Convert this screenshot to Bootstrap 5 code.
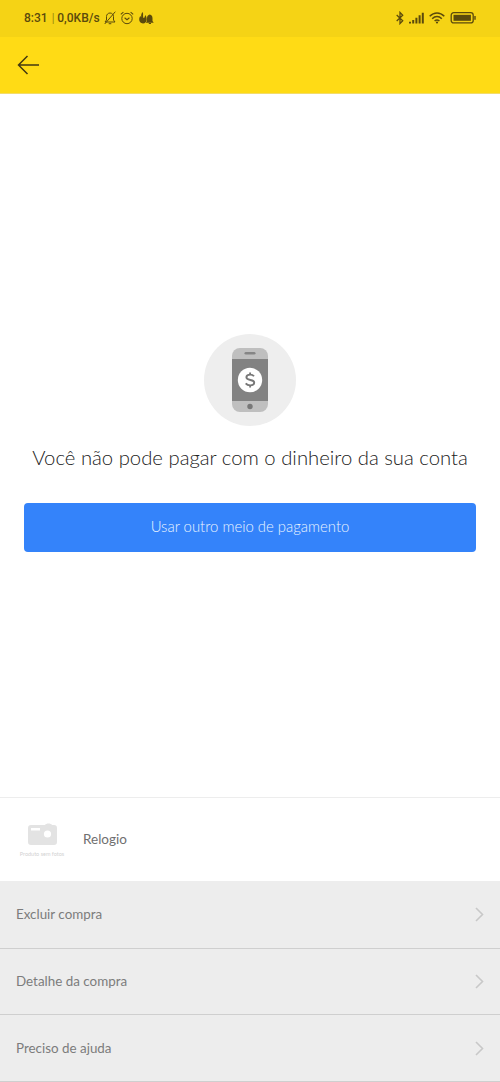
<!DOCTYPE html>
<html lang="pt-BR">
<head>
  <meta charset="UTF-8">
  <meta name="viewport" content="width=device-width, initial-scale=1">
  <title>Pagamento</title>
  <link rel="stylesheet" href="https://cdn.jsdelivr.net/npm/bootstrap@5.3.0/dist/css/bootstrap.min.css">
  <style>
    body { font-family: Lato, "Liberation Sans", sans-serif; color: #4f4f4f; height: 1082px; overflow: hidden; }
    svg { display: block; flex: none; }
    .status-bar { height: 37px; background: #f5d315; color: #5b4a0c; padding: 0 24px 1px; font: 500 12px Roboto, sans-serif; }
    .status-sep { padding: 0 3px 0 4px; opacity: .8; }
    .icon-gap { margin-left: 5px; }
    .top-bar { height: 57px; background: #ffdb15; padding-left: 17px; border-bottom: 1px solid #f3dc6c; }
    .notice { padding: 0 24px 6px; }
    .notice-title { font-size: 20.3px; font-weight: 300; line-height: 28px; margin: 17px 0 32px; color: #222; }
    .btn-pay { height: 49px; background: #3483fa; border: 0; border-radius: 4px; color: #e8f3ff; font-size: 14.9px; font-weight: 300; padding: 0 0 1px; }
    .btn-pay:hover { background: #2968c8; color: #fff; }
    .product { height: 84px; border-top: 1px solid #ededed; padding-left: 19px; font-size: 13.5px; color: #707070; }
    .thumb { width: 46px; padding-top: 2px; margin-right: 18px; font-size: 5.5px; line-height: 8px; color: #d2d2d2; }
    .options .list-group-item { height: 67px; background: #ededed; border-color: #cfcfcf; border-width: 0 0 1px; color: #7c7c7c; font-size: 13.4px; padding: 0 16px; }
    .options .list-group-item:first-child { height: 68px; }
    .options .list-group-item:nth-child(2) { height: 66px; }
    .options .list-group-item:last-child { border-bottom-width: 1px; }
  </style>
</head>
<body class="d-flex flex-column bg-white">
  <!-- Barra de status -->
  <div class="status-bar d-flex align-items-center">
    <span>8:31</span>
    <span class="status-sep fw-light">|</span>
    <span>0,0KB/s</span>
    <svg width="12" height="14" viewBox="0 0 12 14" fill="none" stroke="currentColor" class="ms-1">
      <path d="M1 11h10L9.500 9V5.500C9.500 3.500 8 2 6 2S2.500 3.500 2.500 5.500V9L1 11M4.700 12.700h2.600M11.300.7.7 13"/>
    </svg>
    <svg width="14" height="14" viewBox="0 0 14 14" fill="none" stroke="currentColor" class="ms-1">
      <circle cx="7" cy="7.500" r="5.200"/><path d="M4.600 6.800 7 8.700l2.400-1.900M.8 3.400l2.600-2.200M13.200 3.400l-2.600-2.200" stroke-width="1.100"/>
    </svg>
    <svg width="15" height="14" viewBox="0 0 15 14" fill="currentColor" class="icon-gap">
      <path d="M3.400 1C4.800 2.500 3.600 4.500 4.300 6.500c.4.900 1.100.5 1.200-.3L6.400 4c1 1.500 1.300 3 1.300 4.800 0 2-1.600 3.700-3.700 3.700C1.500 12.500.2 10.700.2 8.600.2 7 .7 6 1.300 5l.9 1.200C1.900 4.300 2.400 2.500 3.400 1z"/>
      <path d="M6.800 11.700 8 10V7.200c0-2 1.100-3.400 2.800-3.700 1.700.3 2.700 1.700 2.700 3.700V10l1.200 1.700zM9.800 12h2.200v1H9.800z"/>
    </svg>

    <svg class="ms-auto" width="8" height="14" viewBox="0 0 8 14" fill="none" stroke="currentColor" stroke-width="1.300">
      <path d="m.7 4 6 5.800L4 12.600V1.400l2.700 2.800L.7 10"/>
    </svg>
    <svg width="15" height="12" viewBox="0 0 15 12" fill="currentColor" class="icon-gap">
      <path d="M0 9.700h2V11.500H0zM3.200 7.900h2v3.600h-2zM6.400 5.700h2v5.800h-2zM9.600 3.300h2v8.200h-2zM12.800.8h2v10.700h-2z"/>
    </svg>
    <svg width="16" height="12" viewBox="0 0 16 12" fill="none" stroke="currentColor" stroke-width="1.500" class="icon-gap">
      <path d="M.7 4.200C5-.2 11-.2 15.300 4.200M3.200 6.700c2.900-2.900 6.700-2.900 9.600 0M5.600 9c1.500-1.300 3.300-1.300 4.800 0"/>
      <circle cx="8" cy="10.500" r="1.100" fill="currentColor" stroke="none"/>
    </svg>
    <svg width="26" height="12" viewBox="0 0 26 12" fill="none" stroke="currentColor" class="icon-gap">
      <rect x="1.200" y=".7" width="22" height="10.200" rx="2.500" stroke-width="1.300"/>
      <path d="M3.500 2.800h17.400v6H3.500z" fill="currentColor" stroke="none"/>
      <path d="M25 4v3.800" stroke-width="1.400"/>
    </svg>
  </div>

  <header class="top-bar d-flex align-items-center">
    <a href="#" aria-label="Voltar">
      <svg width="23" height="20" viewBox="0 0 23 20" fill="none" stroke="#443a10" stroke-width="1.500">
        <path d="M22 10H1.500M10.500 1 1.500 10l9 9"/>
      </svg>
    </a>
  </header>

  <!-- Aviso central -->
  <main class="notice flex-grow-1 d-flex flex-column align-items-center justify-content-center">
    <svg width="92" height="92" viewBox="0 0 92 92">
      <circle cx="46" cy="46" r="46" fill="#eee"/>
      <rect x="28" y="14" width="36" height="64" rx="8" fill="#bfbfbf"/>
      <path d="M28 25h36v42H28z" fill="#828282"/>
      <rect x="40.500" y="18" width="11" height="2.600" rx="1.300" fill="#858585"/>
      <circle cx="46" cy="72.500" r="2.700" fill="#777"/>
      <circle cx="46" cy="46" r="12.200" fill="#fff"/>
      <path d="M50 42.300c-.8-1.100-2.200-1.700-3.900-1.700-2.200 0-3.700 1-3.700 2.600 0 3.900 7.800 1.600 7.800 5.400 0 1.700-1.600 2.800-4 2.800-1.900 0-3.500-.7-4.500-2M46.100 38.500v2.100M46.100 51.400v2.100" fill="none" stroke="#777" stroke-width="1.900"/>
    </svg>
    <h1 class="notice-title text-nowrap">Você não pode pagar com o dinheiro da sua conta</h1>
    <button type="button" class="btn btn-pay w-100">Usar outro meio de pagamento</button>
  </main>

  <section class="product d-flex align-items-center">
    <div class="thumb d-flex flex-column align-items-center">
      <svg width="29" height="23" viewBox="0 0 29 23">
        <path d="M3 2h14c1-2 6-2 7 0h2q3 0 3 3v14q0 3-3 3H3q-3 0-3-3V5q0-3 3-3z" fill="#e3e3e3"/>
        <rect x="3" y="5" width="9" height="2.500" fill="#fff"/>
        <circle cx="19.500" cy="11" r="3.600" fill="#fff"/>
      </svg>
      <span class="text-nowrap mt-1">Produto sem fotos</span>
    </div>
    <span>Relogio</span>
  </section>

  <div class="options list-group list-group-flush">
    <a href="#" class="list-group-item d-flex align-items-center justify-content-between">
      Excluir compra
      <svg width="9" height="15" viewBox="0 0 9 15" fill="none" stroke="#c8c8c8" stroke-width="1.600"><path d="m1 1 6.500 6.500L1 14"/></svg>
    </a>
    <a href="#" class="list-group-item d-flex align-items-center justify-content-between">
      Detalhe da compra
      <svg width="9" height="15" viewBox="0 0 9 15" fill="none" stroke="#c8c8c8" stroke-width="1.600"><path d="m1 1 6.500 6.500L1 14"/></svg>
    </a>
    <a href="#" class="list-group-item d-flex align-items-center justify-content-between">
      Preciso de ajuda
      <svg width="9" height="15" viewBox="0 0 9 15" fill="none" stroke="#c8c8c8" stroke-width="1.600"><path d="m1 1 6.500 6.500L1 14"/></svg>
    </a>
  </div>

  <script src="https://cdn.jsdelivr.net/npm/bootstrap@5.3.0/dist/js/bootstrap.bundle.min.js"></script>
</body>
</html>
